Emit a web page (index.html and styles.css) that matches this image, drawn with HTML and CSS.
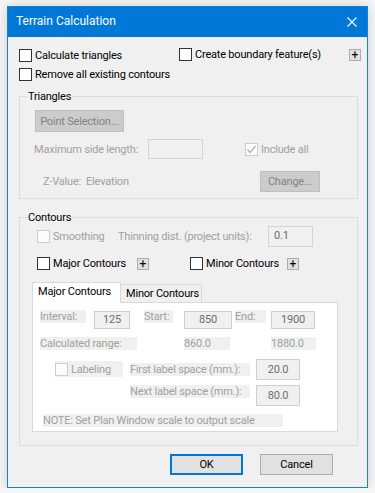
FILE: index.html
```html
<!DOCTYPE html>
<html lang="en">
<head>
    <meta charset="UTF-8">
    <meta name="viewport" content="width=device-width, initial-scale=1.0">
    <title>Terrain Calculation</title>
    <link rel="stylesheet" href="styles.css">
</head>
<body>
    <div class="window">
        <div class="titlebar">
            <span class="title">Terrain Calculation</span>
            <svg class="close" width="10" height="10" viewBox="0 0 10 10">
                <path d="M0.5 0.5 L9.5 9.5 M9.5 0.5 L0.5 9.5" stroke="#fff" stroke-width="1.1" fill="none"/>
            </svg>
        </div>

        <div class="content">
            <div class="top-opts">
                <div class="top-col">
                    <label class="chk"><span class="box"></span>Calculate triangles</label>
                    <label class="chk"><span class="box"></span>Remove all existing contours</label>
                </div>
                <label class="chk boundary"><span class="box"></span>Create boundary feature(s)</label>
                <span class="plus plus-boundary">+</span>
            </div>

            <fieldset class="group triangles">
                <legend>Triangles</legend>
                <button class="btn disabled point-btn">Point Selection...</button>
                <div class="row max-row">
                    <span class="dis max-lbl">Maximum side length:</span>
                    <span class="edit max-edit"></span>
                    <label class="chk dis include"><span class="box checked">
                        <svg width="11" height="11" viewBox="0 0 11 11"><path d="M1.5 5.5 L4 8.5 L9.5 2" stroke="#b0b0b0" stroke-width="1.2" fill="none"/></svg>
                    </span>Include all</label>
                </div>
                <div class="row z-row">
                    <span class="dis z-lbl">Z-Value:&nbsp; Elevation</span>
                    <button class="btn disabled change-btn">Change...</button>
                </div>
            </fieldset>

            <fieldset class="group contours">
                <legend>Contours</legend>
                <div class="row smooth-row">
                    <label class="chk dis smooth"><span class="box"></span>Smoothing</label>
                    <span class="dis thin-lbl">Thinning dist. (project units):</span>
                    <span class="edit thin-edit">0.1</span>
                </div>
                <div class="row kinds-row">
                    <label class="chk major"><span class="box"></span>Major Contours</label>
                    <span class="plus">+</span>
                    <label class="chk minor"><span class="box"></span>Minor Contours</label>
                    <span class="plus">+</span>
                </div>

                <div class="tabs">
                    <span class="tab active">Major Contours</span>
                    <span class="tab">Minor Contours</span>
                </div>
                <div class="panel">
                    <div class="prow range-row">
                        <span class="glbl w-interval">Interval:</span>
                        <span class="val v-interval">125</span>
                        <span class="glbl w-start">Start:</span>
                        <span class="val v-start">850</span>
                        <span class="glbl w-end">End:</span>
                        <span class="val v-end">1900</span>
                    </div>
                    <div class="prow calc-row">
                        <span class="glbl w-calc">Calculated range:</span>
                        <span class="glbl w-from">860.0</span>
                        <span class="glbl w-to">1880.0</span>
                    </div>
                    <div class="prow label-row">
                        <label class="chk dis labeling"><span class="box"></span>Labeling</label>
                        <span class="glbl w-space">First label space (mm.):</span>
                        <span class="val v-space">20.0</span>
                    </div>
                    <div class="prow next-row">
                        <span class="glbl w-space">Next label space (mm.):</span>
                        <span class="val v-space">80.0</span>
                    </div>
                    <div class="prow note-row">
                        <span class="glbl w-note">NOTE: Set Plan Window scale to output scale</span>
                    </div>
                </div>
            </fieldset>

            <div class="actions">
                <button class="btn ok">OK</button>
                <button class="btn cancel">Cancel</button>
            </div>
        </div>
    </div>
</body>
</html>
```

FILE: styles.css
```css
body {
    margin: 0;
    padding: 6px 0 0 7px;
    background: #f7f7f7;
    font-family: Roboto, "Liberation Sans", sans-serif;
    font-size: 11px;
    letter-spacing: -0.2px;
    color: #000;
}

.window {
    width: 359px;
    height: 480px;
    border: 1px solid #1b7fd3;
    background: #f0f0f0;
    box-shadow: 0 0 12px rgba(0, 0, 0, 0.18);
    display: flex;
    flex-direction: column;
    white-space: nowrap;
}

.titlebar {
    height: 30px;
    background: #0078d7;
    color: #fff;
    display: flex;
    align-items: center;
    justify-content: space-between;
    padding: 0 10px 0 8px;
}

.title {
    font-size: 12px;
    letter-spacing: 0;
    padding-bottom: 2px;
}

.close {
    margin-bottom: 1px;
}

.content {
    padding: 11px 0 0 11px;
}

/* checkboxes */
.chk {
    display: flex;
    align-items: center;
    height: 15px;
    flex-shrink: 0;
}

.box {
    width: 11px;
    height: 11px;
    border: 1px solid #333;
    background: #fff;
    margin-right: 3px;
    display: flex;
    align-items: center;
    justify-content: center;
    flex-shrink: 0;
}

.dis {
    color: #a0a0a0;
}

.chk.dis .box {
    border-color: #cccccc;
    background: #fcfcfc;
}

.plus {
    width: 10px;
    height: 10px;
    border: 1px solid #adadad;
    background: #e1e1e1;
    font-size: 12px;
    letter-spacing: 0;
    line-height: 10px;
    text-align: center;
    flex-shrink: 0;
}

/* top options */
.top-opts {
    display: flex;
    align-items: flex-start;
}

.top-col {
    display: flex;
    flex-direction: column;
    gap: 4px;
    width: 160px;
    flex-shrink: 0;
}

.boundary {
    margin-top: -1px;
    width: 170px;
}

.plus-boundary {
    margin-top: 1px;
}

/* group boxes */
.group {
    box-sizing: border-box;
    width: 339px;
    margin: 0;
    border: 1px solid #dcdcdc;
    padding: 0;
    min-width: 0;
}

.group legend {
    padding: 0 1px;
    margin-left: 7px;
    line-height: 15px;
}

.triangles {
    margin-top: 7px;
    height: 110px;
}

.row {
    display: flex;
    align-items: center;
}

.btn {
    font-family: inherit;
    font-size: 11px;
    letter-spacing: -0.2px;
    background: #e1e1e1;
    border: 1px solid #adadad;
    color: #000;
    padding: 0;
    white-space: nowrap;
}

.btn.disabled {
    background: #cccccc;
    border-color: #bfbfbf;
    color: #838383;
}

.point-btn {
    width: 89px;
    height: 22px;
    margin: 6px 0 0 15px;
    display: block;
}

.edit {
    height: 18px;
    border: 1px solid #d4d4d4;
    background: #f0f0f0;
    color: #6d6d6d;
    padding-left: 4px;
    line-height: 18px;
    flex-shrink: 0;
}

.max-row {
    margin-top: 7px;
}

.max-lbl {
    margin-left: 14px;
    width: 114px;
    flex-shrink: 0;
}

.max-edit {
    width: 49px;
}

.include {
    margin-left: 42px;
}

.z-row {
    margin-top: 12px;
}

.z-lbl {
    margin-left: 23px;
    width: 217px;
    flex-shrink: 0;
}

.change-btn {
    width: 60px;
    height: 21px;
}

/* contours */
.contours {
    margin-top: 11px;
    height: 236px;
}

.smooth-row {
    margin-top: 1px;
}

.smooth {
    margin-left: 17px;
    width: 81px;
}

.thin-lbl {
    width: 150px;
    flex-shrink: 0;
}

.thin-edit {
    width: 38px;
    height: 19px;
    padding-left: 5px;
}

.kinds-row {
    margin-top: 9px;
}

.major {
    margin-left: 17px;
    width: 100px;
}

.minor {
    margin-left: 41px;
    width: 97px;
}

.tabs {
    display: flex;
    align-items: flex-end;
    margin: 11px 0 0 12px;
    height: 20px;
}

.tab {
    height: 17px;
    padding: 0 5px;
    border: 1px solid #d9d9d9;
    border-bottom: none;
    background: #f0f0f0;
    line-height: 18px;
}

.tab.active {
    height: 20px;
    width: 77px;
    background: #fff;
    line-height: 18px;
    position: relative;
    margin-bottom: -1px;
    z-index: 1;
}

.tab + .tab {
    border-left: none;
    width: 70px;
}

.panel {
    margin-left: 12px;
    width: 304px;
    height: 128px;
    border: 1px solid #d9d9d9;
    background: #fff;
    color: #a0a0a0;
}

.prow {
    display: flex;
    align-items: flex-start;
}

.glbl {
    background: #f0f0f0;
    line-height: 13px;
    height: 13px;
    overflow: hidden;
    flex-shrink: 0;
}

.val {
    height: 16px;
    border: 1px solid #cfcfcf;
    background: #f0f0f0;
    color: #6d6d6d;
    line-height: 16px;
    margin-top: 1px;
    text-align: center;
    flex-shrink: 0;
}

.range-row {
    margin: 7px 0 0 7px;
}

.w-interval { width: 46px; }
.v-interval { width: 34px; margin-left: 8px; }
.w-start { width: 29px; margin-left: 14px; }
.v-start { width: 46px; margin-left: 11px; }
.w-end { width: 31px; margin-left: 3px; }
.v-end { width: 42px; margin-left: 5px; }

.calc-row {
    margin: 8px 0 0 7px;
}

.w-calc { width: 97px; }
.w-from { width: 46px; margin-left: 47px; }
.w-to { width: 45px; margin-left: 41px; }

.label-row {
    margin: 8px 0 0 22px;
    align-items: center;
}

.labeling {
    width: 68px;
    height: 16px;
    background: #f0f0f0;
}

.w-space {
    width: 120px;
    margin-left: 7px;
}

.v-space {
    width: 42px;
    height: 19px;
    line-height: 19px;
    margin-left: 6px;
}

.next-row {
    margin: 4px 0 0 90px;
}

.next-row .w-space {
    margin-top: 1px;
}

.note-row {
    margin: 8px 0 0 10px;
}

.w-note {
    width: 240px;
}

/* buttons */
.actions {
    display: flex;
    gap: 17px;
    margin: 8px 0 0 151px;
}

.ok,
.cancel {
    width: 73px;
    height: 21px;
}

.ok {
    border: 2px solid #0078d7;
}
```
